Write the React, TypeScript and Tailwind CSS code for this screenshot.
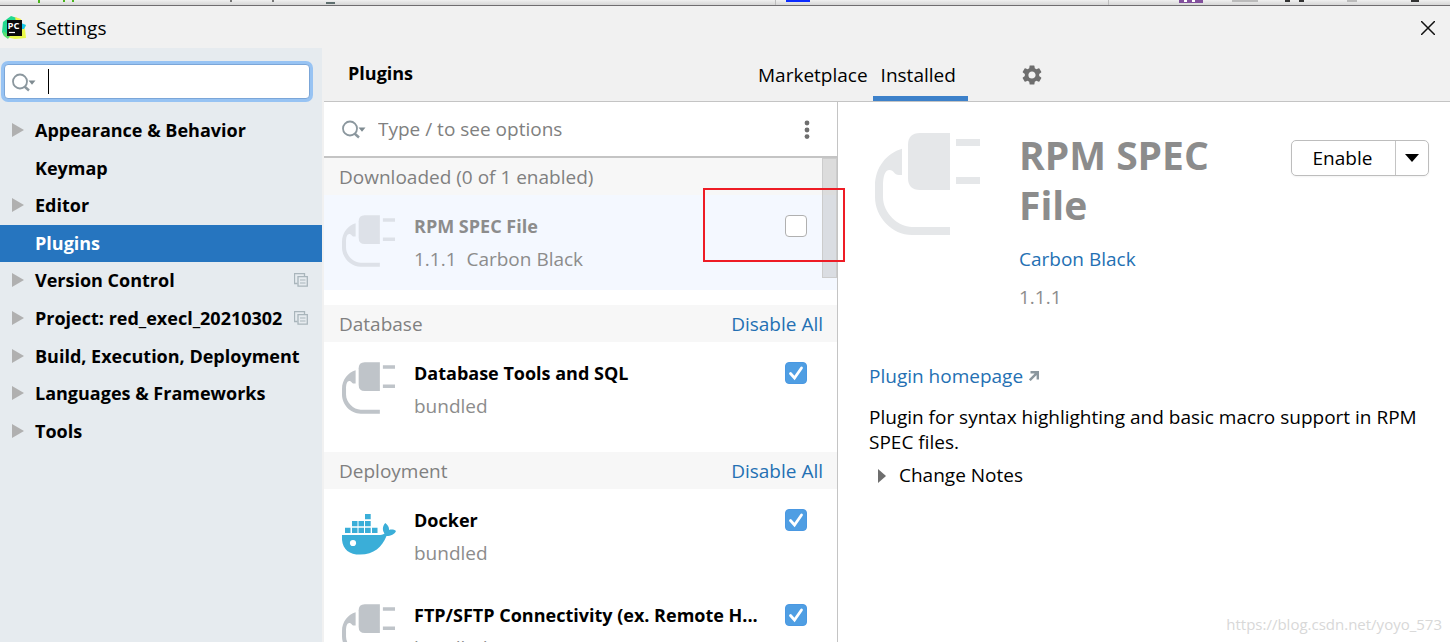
import React, { useState } from 'react'

interface NavItem {
  label: string
  expandable?: boolean
  copy?: boolean
}

const NAV_ITEMS: NavItem[] = [
  { label: 'Appearance & Behavior', expandable: true },
  { label: 'Keymap' },
  { label: 'Editor', expandable: true },
  { label: 'Plugins' },
  { label: 'Version Control', expandable: true, copy: true },
  { label: 'Project: red_execl_20210302', expandable: true, copy: true },
  { label: 'Build, Execution, Deployment', expandable: true },
  { label: 'Languages & Frameworks', expandable: true },
  { label: 'Tools', expandable: true },
]

const PlugIcon = ({ className }: { className?: string }) => (
  <svg viewBox="15 13 105 102" className={className} fill="currentColor" aria-hidden="true">
    <path d="M60 13H90V70H60Q48 70 48 58V25Q48 13 60 13Z" />
    <path d="M96 19h24v7H96zM96 57h24v7H96z" />
    <path d="M42 28.700C27 33 15 47 15 66V77C15 97 32 115 52 115H90V107H52C38 107 23 93 23 77V66C23 56 25 50 29.500 50C34 50 34 55 39 55H42Z" />
  </svg>
)

const DockerIcon = () => (
  <svg viewBox="18 19 54 41" className="h-[41px] w-[54px] text-[#3aaed8]" fill="currentColor" aria-hidden="true">
    <path d="M41 19h5.700v5.300H41zM28 26h5.500v5.200H28zM34.500 26H40v5.200h-5.500zM41 26h5.700v5.200H41z" />
    <path d="M21 32.700h5.500V38H21zM28 32.700h5.500V38H28zM34.500 32.700H40V38h-5.500zM41 32.700h5.700V38H41zM48 32.700h5.500V38H48z" />
    <path d="M18 40H54C57 40 59 39.500 60.500 38.500C58 35 58.500 31 61.300 28C64 30 65.300 32.500 65 35C67.500 34.300 70 34.500 72 36C70.500 39.500 67 41 62.500 41C58 52 50 59.500 36 59.500C24 59.500 17 53 18 40Z" />
    <circle cx="29" cy="48" r="3.100" fill="#fff" />
  </svg>
)

const SearchIcon = () => (
  <svg viewBox="0 0 26 20" className="h-5 w-[26px] shrink-0" fill="none" aria-hidden="true">
    <circle cx="9" cy="9.500" r="7" stroke="#8b979e" strokeWidth="1.800" />
    <path d="M13.500 14.500l4.500 4" stroke="#8b979e" strokeWidth="2.400" />
    <path d="M17.500 8.500h7L21 12.800z" fill="#7f8b91" />
  </svg>
)

const CopyIcon = () => (
  <svg viewBox="0 0 14 14" className="h-3.5 w-3.5" fill="none" stroke="#a9b5bb" aria-hidden="true">
    <path d="M3.500 10.500H.5V.5H10.500V3" strokeWidth="1.300" />
    <path d="M4 3.700h9.300v9.500H4z" strokeWidth="1.300" />
    <path d="M6 7h5.500M6 10h5.500" />
  </svg>
)

const PyCharmIcon = () => (
  <svg viewBox="0 0 24 24" className="h-6 w-6" aria-hidden="true">
    <path d="M1 6L9 0L15 2L13 20L2 20L0 16Z" fill="#22d88f" />
    <path d="M13 1L19 3L20 8L24 9L22 14L16 16Z" fill="#f0ee4e" />
    <path d="M19 7L24 9L22 13L19 13Z" fill="#12c3ee" />
    <path d="M2 19L17 15L23 13L24 22L13 23L8 22Z" fill="#e9f84a" />
    <path d="M1 15L8 20L6 23L2 20Z" fill="#5be06d" />
    <path d="M5 4H20V20H5Z" fill="#0a0a0a" />
    <path d="M7 16.500H13" stroke="#fff" strokeWidth="1.200" />
    <text x="5.500" y="12.500" fontSize="9.500" fontWeight="700" fill="#fff" fontFamily="Open Sans, sans-serif">
      PC
    </text>
  </svg>
)

const GearIcon = () => (
  <svg viewBox="0 0 24 24" className="h-6 w-6" fill="#6e6e6e" aria-hidden="true">
    <path d="M19.140 12.940c.040-.3.060-.61.060-.94 0-.32-.020-.64-.070-.94l2.030-1.580a.49.490 0 0 0 .12-.61l-1.920-3.320a.488.488 0 0 0-.59-.22l-2.390.96c-.5-.38-1.030-.7-1.620-.94l-.36-2.540a.484.484 0 0 0-.48-.41h-3.840c-.24 0-.43.170-.47.410l-.36 2.540c-.59.240-1.130.570-1.620.940l-2.390-.96c-.22-.08-.47 0-.59.220L2.740 8.870c-.12.210-.08.470.12.610l2.030 1.580c-.05.3-.09.630-.09.940s.020.640.070.940l-2.030 1.580a.49.490 0 0 0-.12.610l1.920 3.320c.12.220.37.290.59.220l2.390-.96c.5.380 1.030.7 1.620.940l.36 2.540c.05.240.24.410.48.410h3.840c.24 0 .44-.17.470-.41l.36-2.540c.59-.24 1.130-.56 1.620-.94l2.390.96c.22.080.47 0 .59-.22l1.920-3.320c.12-.22.070-.47-.12-.61l-2.010-1.580zM12 15.600A3.610 3.610 0 0 1 8.400 12c0-1.980 1.620-3.600 3.600-3.600s3.600 1.620 3.600 3.600-1.620 3.600-3.600 3.600z" />
  </svg>
)

/* lower edge of the editor toolbar behind the dialog */
const EditorEdge = () => (
  <div className="h-1.5 shrink-0 overflow-hidden border-b border-[#6f6d70] bg-linear-to-b from-[#f0f0f0] to-[#d6d6d6]">
    <svg width="1450" height="5" aria-hidden="true">
      <path d="M38 0h2v3h-2zM63 0h2v2h-2zM72 0h2v2h-2z" fill="#4cb51f" />
      <path d="M230 0h2v2h-2zM272 0h2v2h-2z" fill="#777" />
      <path d="M326 2h9v2h-9z" fill="#5f6f6f" />
      <path d="M775 0h1v5h-1zM1108 0h1v5h-1z" fill="#bdbdbd" />
      <path d="M786 0h24v2h-24z" fill="#0b2bff" />
      <path d="M1179 0h24v3h-24z" fill="#82509c" />
      <path d="M1184 0h3v2h-3zM1192 0h3v2h-3z" fill="#fff" />
      <path d="M1232 0h26v2h-26zM1347 0h10v2h-10z" fill="#bbb" />
      <path d="M1285 0h5v2h-5zM1299 0h5v2h-5zM1411 0h8v2h-8z" fill="#333" />
    </svg>
  </div>
)

const Sidebar = ({ active, onSelect }: { active: string; onSelect: (label: string) => void }) => (
  <aside className="w-[322px] shrink-0 bg-[#e6ebef]">
    <div className="pt-4 pr-3 pl-1">
      <div className="flex h-[35px] items-center rounded-sm border border-[#7ba6d8] bg-white pl-1.5 ring-3 ring-[#97c3f3]">
        <SearchIcon />
        <span className="ml-[11px] h-[25px] w-px bg-black" />
        <input
          type="text"
          aria-label="Search settings"
          className="w-full min-w-0 flex-1 bg-transparent outline-none"
        />
      </div>
    </div>
    <ul className="mt-[13px] grid h-[338px] auto-rows-fr">
      {NAV_ITEMS.map((item) => (
        <li key={item.label} className="flex">
          <button
            onClick={() => onSelect(item.label)}
            className={`flex w-full items-center pr-3.5 pb-px pl-3 text-left text-lg font-bold whitespace-nowrap ${
              active === item.label ? 'bg-[#2675bf] text-white' : ''
            }`}
          >
            <span className="w-[23px] shrink-0">
              {item.expandable && (
                <svg viewBox="0 0 12 14" className="h-3.5 w-3" fill="#b0b0b0" aria-hidden="true">
                  <path d="M0 0L12 7L0 14Z" />
                </svg>
              )}
            </span>
            <span className="flex-1">{item.label}</span>
            {item.copy && <CopyIcon />}
          </button>
        </li>
      ))}
    </ul>
  </aside>
)

const GroupHeader = ({ title, action }: { title: string; action?: boolean }) => (
  <div className="flex h-[37px] items-center justify-between bg-[#f7f7f7] pr-3.5 pl-[15px] text-[19px]/7 text-[#808080]">
    <h2>{title}</h2>
    {action && (
      <a href="#disable" className="text-[#2470b3]">
        Disable All
      </a>
    )}
  </div>
)

interface PluginRowProps {
  id: string
  name: string
  info: string
  icon: React.ReactNode
  enabled?: boolean
  selected?: boolean
}

const PluginRow = ({ id, name, info, icon, enabled = true, selected = false }: PluginRowProps) => (
  <div className={`flex h-[95px] items-start pr-[30px] pl-[18px] ${selected ? 'bg-[#f4f8ff]' : ''}`}>
    <div className="w-[72px] shrink-0 pt-5">{icon}</div>
    <div className="min-w-0 flex-1 pt-4 text-[#8c8c8c]">
      <label
        htmlFor={id}
        className={`block truncate text-lg/[30px] font-bold ${selected ? 'text-[#8c8c8c]' : 'text-black'}`}
      >
        {name}
      </label>
      <p className="mt-0.5 text-[19px]/[33px] whitespace-pre">{info}</p>
    </div>
    <div className="relative mt-5 ml-4 h-[22px] w-[22px] shrink-0">
      <input
        id={id}
        type="checkbox"
        defaultChecked={enabled}
        className="peer block h-[22px] w-[22px] appearance-none rounded-sm border border-[#b0b0b0] bg-white checked:border-[#4a98e2] checked:bg-[#4f9ee3]"
      />
      <svg
        viewBox="0 0 22 22"
        className="pointer-events-none absolute inset-0 hidden peer-checked:block"
        fill="none"
        stroke="#fff"
        strokeWidth="2.800"
        aria-hidden="true"
      >
        <path d="M5.500 11.500L9.500 16L16.500 6" strokeLinecap="round" />
      </svg>
    </div>
  </div>
)

const PluginList = () => (
  <section className="relative w-[514px] shrink-0 border-r border-[#c4c4c4] bg-white">
    <div className="flex h-14 items-center border-b-2 border-[#c4c4c4] pr-6 pl-[17px]">
      <SearchIcon />
      <input
        type="text"
        aria-label="Search plugins"
        placeholder="Type / to see options"
        className="ml-[11px] min-w-0 flex-1 text-[19px]/7 outline-none placeholder:text-[#808080]"
      />
      <button aria-label="More">
        <svg viewBox="0 0 12 20" className="h-5 w-3" fill="#6e6e6e" aria-hidden="true">
          <circle cx="6" cy="4" r="2.400" />
          <circle cx="6" cy="11" r="2.400" />
          <circle cx="6" cy="17.600" r="2.400" />
        </svg>
      </button>
    </div>

    {/* plugin groups */}
    <div className="relative">
      <GroupHeader title="Downloaded (0 of 1 enabled)" />
      <PluginRow
        id="rpm"
        name="RPM SPEC File"
        info="1.1.1  Carbon Black"
        icon={<PlugIcon className="h-[52px] w-[53px] text-[#dde1e8]" />}
        enabled={false}
        selected
      />
      <div className="mt-[15px]">
        <GroupHeader title="Database" action />
        <PluginRow
          id="database"
          name="Database Tools and SQL"
          info="bundled"
          icon={<PlugIcon className="h-[52px] w-[53px] text-[#bfc4c9]" />}
        />
      </div>
      <div className="mt-[15px]">
        <GroupHeader title="Deployment" action />
        <PluginRow
          id="docker"
          name="Docker"
          info="bundled"
          icon={
            <div className="pt-[5px]">
              <DockerIcon />
            </div>
          }
        />
        <PluginRow
          id="ftp"
          name="FTP/SFTP Connectivity (ex. Remote H..."
          info="bundled"
          icon={<PlugIcon className="h-[52px] w-[53px] text-[#bfc4c9]" />}
        />
      </div>
      {/* scrollbar thumb */}
      <div className="absolute top-0 right-0 h-[120px] w-[15px] border border-[#cccccc] bg-[#8c8c8c]/25" />
      {/* highlight around the checkbox */}
      <div className="pointer-events-none absolute top-[30px] -right-2 z-10 h-[74px] w-[142px] border-2 border-[#ee1c25]" />
    </div>
  </section>
)

const PluginDetails = () => (
  <section className="flex-1 bg-white pr-[21px] pl-[31px]">
    <div className="flex items-start pt-[31px]">
      <PlugIcon className="ml-1.5 h-[102px] w-[105px] shrink-0 text-[#e5e7e9]" />
      <div className="ml-[39px] w-60 text-[19px]/7">
        <h1 className="-mt-[3px] text-[39px]/[50px] font-bold text-[#8c8c8c]">RPM SPEC File</h1>
        <a href="#vendor" className="mt-[15px] block text-[#2470b3]">
          Carbon Black
        </a>
        <p className="mt-2.5 text-[#8c8c8c]">1.1.1</p>
      </div>
      <div className="mt-[7px] ml-auto flex h-9 shrink-0 rounded-[5px] border border-[#bdbdbd] text-[19px]/7 shadow-xs">
        <button className="w-[103px] pr-0.5">Enable</button>
        <button aria-label="More actions" className="flex w-[33px] items-center justify-center border-l border-[#c4c4c4]">
          <svg viewBox="0 0 14 8" className="h-2 w-3.5" aria-hidden="true">
            <path d="M0 0H14L7 8Z" />
          </svg>
        </button>
      </div>
    </div>
    <a href="#homepage" className="mt-[51px] flex items-center gap-1.5 text-[19px]/7 text-[#2470b3]">
      Plugin homepage
      <svg viewBox="0 0 10 10" className="h-2.5 w-2.5" fill="none" stroke="#8b979e" strokeWidth="2.400" aria-hidden="true">
        <path d="M1.500 1.200H8.800V8.500M8.800 1.200L.8 9.200" />
      </svg>
    </a>
    <p className="mt-[15px] text-[19px]/[25px]">
      Plugin for syntax highlighting and basic macro support in RPM SPEC files.
    </p>
    <button className="mt-2 flex items-center pl-[9px] text-[19px]/[25px]">
      <svg viewBox="0 0 8 14" className="mr-[13px] h-3.5 w-2" fill="#6e6e6e" aria-hidden="true">
        <path d="M0 0L8 7L0 14Z" />
      </svg>
      Change Notes
    </button>
  </section>
)

const App = () => {
  const [active, setActive] = useState('Plugins')

  return (
    <div className="relative flex h-screen flex-col overflow-hidden bg-[#f1f1f1] font-['Open_Sans','Noto_Sans',sans-serif] text-black">
      <EditorEdge />
      <header className="flex h-[42px] shrink-0 items-center pt-0.5 pr-[15px] pl-0.5 text-[19px]/7">
        <PyCharmIcon />
        <span className="ml-2.5">Settings</span>
        <button aria-label="Close" className="ml-auto">
          <svg viewBox="0 0 14 14" className="h-3.5 w-3.5" stroke="#111" strokeWidth="1.500" aria-hidden="true">
            <path d="M0 0L14 14M14 0L0 14" />
          </svg>
        </button>
      </header>

      <div className="flex min-h-0 flex-1 gap-0.5">
        <Sidebar active={active} onSelect={setActive} />
        <main className="flex min-w-0 flex-1 flex-col">
          <div className="flex h-[54px] shrink-0 items-stretch border-b border-[#c4c4c4] text-[19px]/7">
            <span className="w-[426px] pt-[11px] pl-6 text-lg font-bold">Plugins</span>
            <nav className="flex">
              <button className="pr-[5px] pl-2">Marketplace</button>
              <button className="border-b-5 border-[#3d81ca] pt-[5px] pr-3 pl-2">Installed</button>
            </nav>
            <button aria-label="Plugin settings" className="ml-[52px]">
              <GearIcon />
            </button>
          </div>
          <div className="flex min-h-0 flex-1">
            <PluginList />
            <PluginDetails />
          </div>
        </main>
      </div>

      <span className="absolute right-2 bottom-1.5 text-[15px]/6 text-[#d8d8d8]">https://blog.csdn.net/yoyo_573</span>
    </div>
  )
}

export default App
